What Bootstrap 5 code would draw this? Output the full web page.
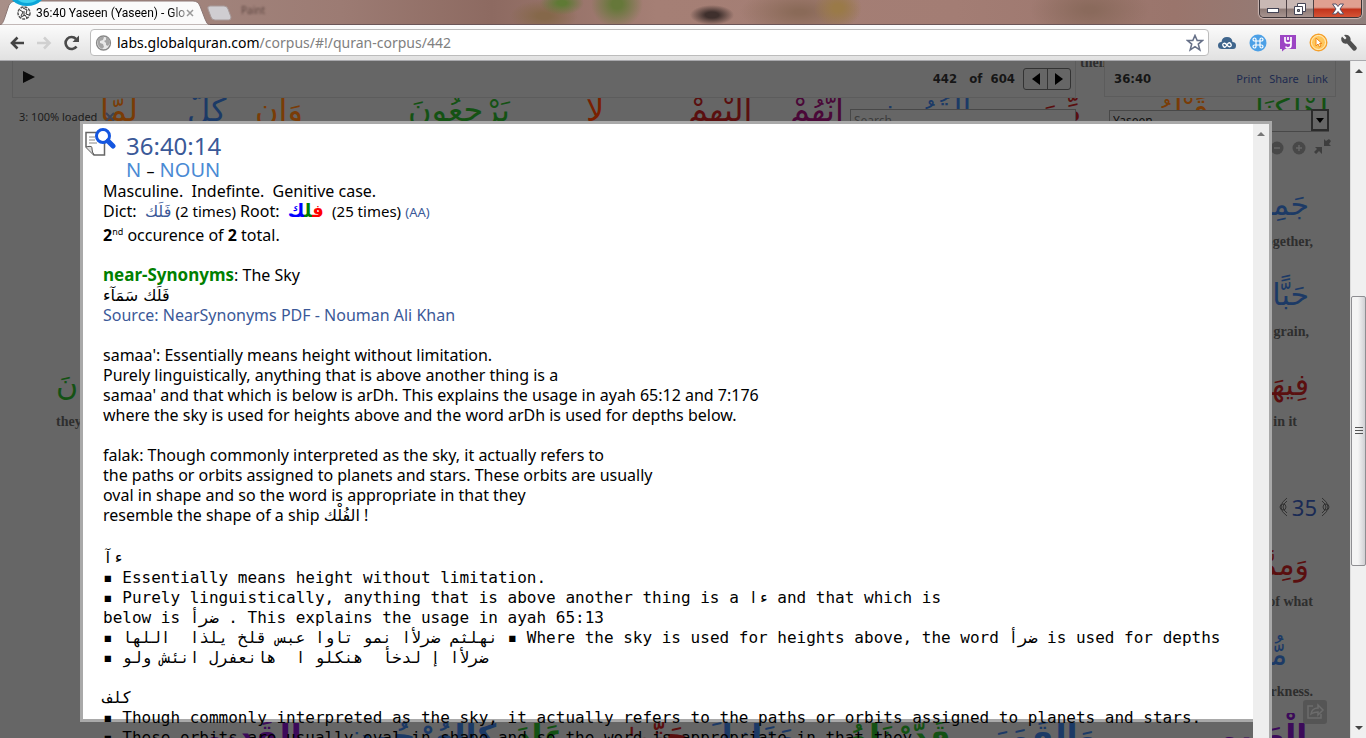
<!DOCTYPE html>
<html lang="en">
<head>
<meta charset="utf-8">
<meta name="viewport" content="width=device-width, initial-scale=1">
<title>36:40 Yaseen (Yaseen) - Global Quran</title>
<link href="https://cdn.jsdelivr.net/npm/bootstrap@5.3.0/dist/css/bootstrap.min.css" rel="stylesheet">
<style>
  :root {
    --dim: #666; --dim-line: #5c5c5c; --frame: #a9a9a9;
    --w-orange: #7a3c06; --w-blue: #1c3a66; --w-green: #145214; --w-red: #5a0f0f;
    --w-purple: #3c0a5a; --w-rust: #7a2000; --w-plum: #4a0838;
  }
  body { font-family: "Noto Sans", "DejaVu Sans", sans-serif; font-size: 16px; line-height: 20px; color: #000; }
  button { font: inherit; }
  .plain { background: none; border: 0; padding: 0; line-height: 0; }

  /* browser frame */
  .tabstrip { height: 25px; background:
      radial-gradient(ellipse 22px 10px at 712px 15px, #3f302d 30%, transparent),
      radial-gradient(ellipse 26px 24px at 617px 4px, #66783a 20%, transparent),
      radial-gradient(ellipse 22px 12px at 562px 3px, #5f7a35 20%, transparent),
      radial-gradient(ellipse 34px 16px at 544px 16px, #85684a 20%, transparent),
      radial-gradient(ellipse 24px 20px at 838px 8px, #9a7a48 20%, transparent),
      radial-gradient(ellipse 60px 24px at 800px 12px, #8a6a58 10%, transparent),
      radial-gradient(ellipse 60px 30px at 1090px 10px, #8a6a5c 10%, transparent),
      linear-gradient(90deg, #a88f88, #9c7b73 25%, #8d6a61 36%, #a57f75 48%, #a37d74 70%, #9a756c 86%, #8f7f7c);
    border-bottom: 1px solid #6b5557; }
  .tab-face { width: 207px; height: 25px; }
  .tab-shape { left: 0; top: 0; }
  .tab-title { font-family: Roboto, sans-serif; font-size: 12px; line-height: 16px; width: 149px; white-space: nowrap; overflow: hidden;
    -webkit-mask-image: linear-gradient(90deg, #000 90%, #0006); }
  .ghost { font-size: 10px; color: #5f4742; filter: blur(1px); }
  .winbtns { border: 1px solid #3c3336; border-top: 0; border-radius: 0 0 5px 5px; height: 18px; overflow: hidden; box-shadow: 0 0 1px 1px #cdb9b5; }
  .winbtns button { width: 27px; height: 18px; border-right: 1px solid #4d4144; background: linear-gradient(#c9b8b4 45%, #8d7975 50%, #ab9893); }
  .winbtns .shut { width: 47px; border: 0; background: linear-gradient(#e0a090 40%, #c2341c 52%, #d8583a); }
  .toolbar { height: 36px; padding: 0 8px 0 6px; background: linear-gradient(#fbfbfb, #e1e1e1); border-bottom: 1px solid #a9a9ad; }
  .urlbar { height: 27px; border: 1px solid #bcbcbc; border-radius: 4px; background: #fff; }
  .url { font-size: 14px; line-height: 24px; }
  .url a { color: #000; text-decoration: none; }
  .url a span { color: #808080; }

  /* dimmed page */
  .viewport { min-height: 0; }
  .stage { background: var(--dim); overflow: hidden; }
  .bar { height: 37px; border: 1px solid var(--dim-line); border-top: 0; }
  .bar-main { padding: 0 4px 0 5px; }
  .bar-side { width: 232px; height: 36px; margin-right: 14px; padding: 0 7px 0 9px; }
  .bar-gap { width: 28px; line-height: 4px; }
  .count { font: bold 13px/16px "DejaVu Sans Condensed", "DejaVu Sans", sans-serif; color: #161616; }
  .mini { font-size: 11px; line-height: 14px; color: #1c2a50; text-decoration: none; }
  .pager { border: 1px solid #333; border-radius: 3px; height: 22px; }
  .pager button { width: 23px; height: 20px; }
  .pager button + button { border-left: 1px solid #333; }
  .serif-b { font-family: "Liberation Serif", serif; font-weight: bold; font-size: 14px; color: #2e2e2e; white-space: nowrap; }
  .verse { display: grid; overflow: hidden; white-space: nowrap; font-family: "DejaVu Sans", sans-serif; }
  .verse > span { min-width: 0; }
  .verse-top { height: 24px; font-size: 32px; line-height: 36px; grid-template-columns: 87fr 68fr 153fr 178fr 102fr 102fr 90fr 160fr 97fr 118fr 95fr; padding-left: 100px; align-content: center; }
  .verse-low { top: 652px; height: 50px; font-size: 32px; line-height: 46px; font-weight: bold; grid-template-columns: 145fr 170fr 105fr 85fr 145fr 140fr 225fr 135fr; padding-left: 200px; }
  .orange { color: var(--w-orange); } .blue { color: var(--w-blue); } .green { color: var(--w-green); }
  .red { color: var(--w-red); } .purple { color: var(--w-purple); } .rust { color: var(--w-rust); } .plum { color: var(--w-plum); }
  .fields { left: 0; right: 0; top: 48px; padding: 0 21px 0 19px; }
  .fields input, .fields select { background: var(--dim); border: 1px solid #484848; border-radius: 0; color: #111; font-size: 12px; height: 22px; line-height: 18px; padding: 0 3px; }
  .fields input { width: 226px; }
  .fields input::placeholder { color: #3c3c3c; opacity: 1; }
  .picker { width: 220px; margin-left: 33px; }
  .picker select { width: 100%; appearance: none; }
  .picker span { right: 0; top: 0; width: 18px; height: 22px; border: 2px solid #2b2b2b; }
  .loaded { font-size: 11px; line-height: 16px; color: #1c1c1c; white-space: nowrap; }
  .tools-row { height: 24px; padding-right: 18px; margin-top: 9px; }
  .gutters { padding-top: 25px; }
  .gutter { width: 78px; }
  .gutter > div { height: 90px; padding-right: 37px; }
  .gutter .word { font: 30px/50px "DejaVu Sans", sans-serif; height: 50px; padding-right: 4px; white-space: nowrap; text-align: right; }
  .gutter .word.indent { padding-right: 26px; }
  .gutter .serif-b { display: flex; justify-content: flex-end; line-height: 24px; }
  .gutter-left { padding: 180px 0 0 56px; }
  .aya { font-size: 22px; color: #1a2b55; }
  .share { right: 23px; bottom: 14px; }

  /* page scrollbar */
  .vtrack { width: 16px; background: #f0f0f0; border-left: 1px solid #dcdcdc; }
  .vthumb { height: 270px; margin-top: 223px; border: 1px solid #8e8e92; border-radius: 2px; background: linear-gradient(90deg, #f4f4f4 45%, #d0d0d4); }

  /* word detail panel */
  .panel { left: 80px; right: 78px; top: 60px; bottom: 0; }
  .sheet { background: #fff; border: 3px solid var(--frame); border-right: 0; margin-bottom: 16px; padding-left: 20px; min-width: 0; }
  .ptrack { width: 19px; border-top: 3px solid var(--frame); border-right: 3px solid var(--frame); background: #eee; }
  .panel a { color: #3b5998; text-decoration: none; }
  .note-icon { left: 2px; top: 3px; }
  .heads { padding: 8px 0 0 23px; }
  .heads h1 { font-size: 24px; line-height: 28px; margin: 0; color: #3b5998; font-weight: 400; }
  .heads h2 { font-size: 20px; line-height: 19px; margin: 0; color: #4a8ad4; font-weight: 400; }
  .heads h2 span { color: #000; font-size: 16px; }
  .sheet p { margin: 0 0 20px; white-space: nowrap; }
  .sheet .facts { margin-bottom: 0; }
  .sheet .count-line { line-height: 28px; margin-bottom: 16px; }
  .sheet .s15 { font-size: 15px; line-height: 16px; }
  .sheet .s13 { font-size: 13px; line-height: 16px; }
  .sheet .near { font-size: 17px; color: green; }
  .sheet sup { font-size: 9px; line-height: 0; top: -6px; }
  .ar { font-family: "DejaVu Sans", sans-serif; line-height: 16px; }
  .root { font-size: 18px; }
  .notes { font: 16px/20px "DejaVu Sans Mono", monospace; margin: 23px 0 0; overflow: visible; color: #000; }
</style>
</head>
<body class="vh-100 d-flex flex-column overflow-hidden">

<header>
  <div class="tabstrip d-flex align-items-start">
    <div class="tab-face position-relative d-flex align-items-center flex-shrink-0">
      <svg class="tab-shape position-absolute" width="210" height="25" viewBox="0 0 210 25"><path d="M0 25C3 24 4 20 6 14L9 5Q11 1 15 1H193Q198 1 200 6L205 19Q207 25 210 25Z" fill="#fafafa" stroke="#8b7674"/><path d="M12 0H42Q36 6 27 6T12 0Z" fill="#0aa5d8"/><path d="M18 0H37Q33 3 27 3T18 0Z" fill="#3fd2f0"/></svg>
      <svg class="position-relative ms-3 flex-shrink-0" width="16" height="16" viewBox="0 0 16 16"><circle cx="8" cy="8" r="6" fill="none" stroke="#555" stroke-width="1.500" stroke-dasharray="3 1"/><path d="M4 5l3 2-2 4M7 3l4 2-1 4 3 1M5 12l4-2 2 3M8 6v5" stroke="#333" fill="none"/></svg>
      <span class="tab-title position-relative ms-1 flex-shrink-0">36:40 Yaseen (Yaseen) - Glo</span>
      <button class="plain position-relative" aria-label="Close tab"><svg width="10" height="10" viewBox="0 0 10 10"><path d="M2 2l6 6M8 2l-6 6" stroke="#999" stroke-width="1.500"/></svg></button>
    </div>
    <button class="plain mt-1" aria-label="New tab"><svg width="26" height="17" viewBox="0 0 26 17"><path d="M3 2H17Q20 2 21 5L24 13Q24 16 22 16H8Q5 16 4 13L1 5Q0 2 3 2Z" fill="#cfcdd1" stroke="#a79a9a"/></svg></button>
    <span class="ghost ms-2">Paint</span>
    <div class="winbtns d-flex ms-auto me-1">
      <button class="plain" aria-label="Minimize"><svg width="14" height="14" viewBox="0 0 14 14"><rect x="1.500" y="6.500" width="11" height="4" fill="#fff" stroke="#445"/></svg></button>
      <button class="plain" aria-label="Restore"><svg width="14" height="14" viewBox="0 0 14 14"><path d="M4.500 1.500h8v8h-8z" fill="#fff" stroke="#445"/><path d="M1.500 4.500h8v8h-8z" fill="#fff" stroke="#445"/><path d="M4.500 7.500h2v2h-2z" fill="#998" stroke="#445"/></svg></button>
      <button class="plain shut" aria-label="Close"><svg width="14" height="14" viewBox="0 0 14 14"><path d="M1.500 2h3.500l2 2.500 2-2.500h3.500L9 7l3.500 5H9L7 9.500 5 12H1.500L5 7Z" fill="#fff" stroke="#545068"/></svg></button>
    </div>
  </div>

  <div class="toolbar d-flex align-items-center">
    <button class="plain ms-1" aria-label="Back"><svg width="18" height="16" viewBox="0 0 18 16"><path d="M14 8H2M7.500 2.500L2 8l5.500 5.500" fill="none" stroke="#444" stroke-width="2.600"/></svg></button>
    <button class="plain ms-2 me-1" aria-label="Forward"><svg width="18" height="16" viewBox="0 0 18 16"><path d="M1 8H13M8 2.500L13.500 8 8 13.500" fill="none" stroke="#d0d0d0" stroke-width="2.600"/></svg></button>
    <button class="plain ms-1 me-2" aria-label="Reload"><svg width="20" height="18" viewBox="0 0 20 18"><path d="M14.500 12.500A6 6 0 1 1 14 5" fill="none" stroke="#4a4a4a" stroke-width="2.600"/><path d="M17 1.500V8H10.500Z" fill="#4a4a4a"/></svg></button>
    <div class="urlbar flex-grow-1 d-flex align-items-center px-1">
      <svg width="18" height="18" viewBox="0 0 18 18"><circle cx="8.500" cy="9" r="7" fill="#e8e8e8" stroke="#888" stroke-width="1.300"/><path d="M3 5q3-3 6-2l-1 3-3 1v2l3 1 1 3-2 2Q2 12 2.500 7ZM11 3q4 1 4 6l-2 3-2-1v-2l-2-2 2-1Z" fill="#a5a5a5"/></svg>
      <span class="url ps-1 me-auto"><a href="#">labs.globalquran.com<span>/corpus/#!/quran-corpus/442</span></a></span>
      <button class="plain" aria-label="Bookmark"><svg width="18" height="18" viewBox="0 0 18 18"><path d="M9 1.500l2.200 5h5.300l-4.200 3.600 1.500 5.700L9 12.600l-4.800 3.200 1.500-5.700L1.500 6.500h5.300Z" fill="#fff" stroke="#667088" stroke-width="1.600"/></svg></button>
    </div>
    <div class="d-flex align-items-center gap-2 ps-2">
      <button class="plain" aria-label="Cloud"><svg width="20" height="18" viewBox="0 0 20 18"><path d="M5 15Q1 15 1 11.500T4.500 8Q5 3 10 3t5.500 5Q19 8 19 11.500T16 15Z" fill="#3f658c"/><path d="M10 11q-2-2.500-3.500-1.500t0 3T10 11t3.500-1.500 0 3T10 11" fill="none" stroke="#fff" stroke-width="1.300"/></svg></button>
      <button class="plain ms-1" aria-label="Shortcuts"><svg width="18" height="18" viewBox="0 0 18 18"><circle cx="9" cy="9" r="8.500" fill="#4ca0e6"/><path d="M7 7H5.500A1.500 1.500 0 1 1 7 5.500v7A1.500 1.500 0 1 1 5.500 11h7A1.500 1.500 0 1 1 11 12.500v-7A1.500 1.500 0 1 1 12.500 7Z" fill="none" stroke="#fff" stroke-width="1.200"/></svg></button>
      <button class="plain ms-1" aria-label="Notes"><svg width="18" height="18" viewBox="0 0 18 18"><path d="M1 1h16v14H6l-3 2.500V15H1Z" fill="#9c45c4"/><path d="M6 3v4q0 2 3 2t3-2M12 3v8q0 3-3 3-2 0-2-1.500M9 3v3" fill="none" stroke="#fff" stroke-width="1.700"/></svg></button>
      <button class="plain ms-1" aria-label="Clicker"><svg width="19" height="19" viewBox="0 0 19 19"><circle cx="9.500" cy="9.500" r="8.300" fill="#ffc65a" stroke="#f5a02c" stroke-width="1.400"/><circle cx="9.500" cy="9.500" r="7" fill="none" stroke="#fff0c8"/><path d="M7 5v8l2-2 1.500 3 1.500-1-1.500-2.500H13Z" fill="#fff" stroke="#f08818"/></svg></button>
      <button class="plain ms-1" aria-label="Settings"><svg width="18" height="18" viewBox="0 0 18 18"><path d="M2 2.500L5 5.500 6.500 4 4 1Q8 0 10 3q1 2 .5 3.500l6 6.500q1 1.500-.5 3t-3 .2L7 9.500Q3 10.500 1.500 7 .5 4 2 2.500Z" fill="#505050"/></svg></button>
    </div>
  </div>
</header>

<div class="viewport flex-grow-1 d-flex">
  <main class="stage flex-grow-1 position-relative d-flex flex-column">

    <div class="d-flex ps-2 flex-shrink-0">
      <div class="bar bar-main flex-grow-1 d-flex align-items-center ms-1">
        <button class="plain ms-1 mb-1" aria-label="Play"><svg width="14" height="14" viewBox="0 0 14 14"><path d="M1 1L13 7 1 13Z" fill="#0a0a0a"/></svg></button>
        <span class="count ms-auto me-2">442 &nbsp; of &nbsp;604</span>
        <div class="pager d-flex">
          <button class="plain" aria-label="Previous page"><svg width="8" height="12" viewBox="0 0 8 12"><path d="M8 0v12L0 6Z"/></svg></button>
          <button class="plain" aria-label="Next page"><svg width="8" height="12" viewBox="0 0 8 12"><path d="M0 0v12L8 6Z"/></svg></button>
        </div>
      </div>
      <div class="bar-gap serif-b overflow-hidden ps-1">their</div>
      <div class="bar bar-side d-flex align-items-center gap-2">
        <span class="count me-auto">36:40</span>
        <a class="mini" href="#">Print</a><a class="mini" href="#">Share</a><a class="mini" href="#">Link</a>
      </div>
    </div>

    <div class="verse verse-top flex-shrink-0">
      <span class="orange">لَّمَّا</span><span class="blue">كُلٌّ</span><span class="orange">وَإِن</span><span class="green">يَرْجِعُونَ</span><span class="rust">لَا</span><span class="red">إِلَيْهِمْ</span><span class="plum">أَنَّهُمْ</span><span class="blue">الْقُرُونِ</span><span class="red">مِّنَ</span><span class="orange">قَبْلَهُم</span><span class="green">أَهْلَكْنَا</span>
    </div>

    <div class="fields position-absolute d-flex align-items-start">
      <span class="loaded d-flex align-items-center gap-2 me-auto">3: 100% loaded <svg width="10" height="10" viewBox="0 0 10 10"><path d="M1 1l8 8M9 1l-8 8" stroke="#3d4456" stroke-width="2"/></svg></span>
      <input type="text" placeholder="Search" aria-label="Search">
      <div class="picker position-relative"><select aria-label="Surah"><option>Yaseen</option></select><span class="position-absolute d-flex align-items-center justify-content-center pe-none"><svg width="8" height="5" viewBox="0 0 8 5"><path d="M0 0h8L4 5Z"/></svg></span></div>
    </div>

    <div class="tools-row d-flex justify-content-end align-items-end gap-2 flex-shrink-0">
      <svg width="14" height="14" viewBox="0 0 14 14"><circle cx="7" cy="7" r="6.500" fill="#484848"/><path d="M4 7h6" stroke="#666" stroke-width="1.500"/></svg>
      <svg width="14" height="14" viewBox="0 0 14 14"><circle cx="7" cy="7" r="6.500" fill="#484848"/><path d="M4 7h6M7 4v6" stroke="#666" stroke-width="1.500"/></svg>
      <svg width="18" height="17" viewBox="0 0 18 17"><path d="M10 1v7h7l-2-2 2-3-2-2-3 2ZM8 16V9H1l2 2-3 3 2 2 3-3Z" fill="#3e3e3e"/></svg>
    </div>

    <div class="gutters d-flex justify-content-between">
      <div class="gutter-left">
        <div class="gutter"><div class="p-0"><div class="word green text-start p-0">نَ</div><span class="serif-b justify-content-start">they</span></div></div>
      </div>
      <div class="gutter d-flex flex-column">
        <div><div class="word blue" dir="rtl">جَمِيعًا</div><span class="serif-b">together,</span></div>
        <div><div class="word blue" dir="rtl">حَبًّا</div><span class="serif-b pe-1">grain,</span></div>
        <div><div class="word red" dir="rtl">فِيهَا</div><span class="serif-b pe-3">in it</span></div>
        <div class="aya d-flex align-items-center justify-content-end pe-3 pt-4"><svg width="9" height="20" viewBox="0 0 9 20"><path d="M8 1Q2 5 2 10t6 9M8 4Q4 7 4 10t4 6" fill="none" stroke="#333"/><circle cx="4" cy="10" r="3" fill="none" stroke="#333"/></svg><span class="px-1">35</span><svg class="me-1" width="9" height="20" viewBox="0 0 9 20"><path d="M1 1q6 4 6 9t-6 9M1 4q4 3 4 6t-4 6" fill="none" stroke="#333"/><circle cx="5" cy="10" r="3" fill="none" stroke="#333"/></svg></div>
        <div><div class="word red" dir="rtl">وَمِمَّا</div><span class="serif-b">of what</span></div>
        <div><div class="word blue indent" dir="rtl">مُّظْلِمُونَ</div><span class="serif-b">darkness.</span></div>
      </div>
    </div>
    <div class="verse verse-low position-absolute start-0 end-0">
      <span class="purple">الْقَدِيمِ</span><span class="blue">كَالْعُرْجُونِ</span><span class="green">عَادَ</span><span class="red">حَتَّىٰ</span><span class="blue">مَنَازِلَ</span><span class="green">قَدَّرْنَاهُ</span><span class="blue">وَالْقَمَرَ</span><span class="purple">الْعَلِيمِ</span>
    </div>
    <button class="plain share position-absolute" aria-label="Share page"><svg width="24" height="24" viewBox="0 0 24 24"><rect width="24" height="24" rx="3" fill="#555"/><path d="M10 6H5v12h13v-4M8 14q1-6 7-6V5l5 5-5 5v-3q-4 0-7 2Z" fill="none" stroke="#6c6c6c" stroke-width="1.500"/></svg></button>

    <section class="panel position-absolute d-flex">
      <div class="sheet flex-grow-1 position-relative">
        <svg class="note-icon position-absolute" width="31" height="30" viewBox="0 0 31 30"><path d="M1 5.500H19.500V28H9L1 20Z" fill="#fff" stroke="#666" stroke-width="1.500"/><path d="M1 20q7-2 6 2 0 3 2 6" fill="#ddd" stroke="#555"/><path d="M4 10h6M4 13h6M4 16h8" stroke="#888"/><circle cx="18" cy="9" r="6.500" fill="#fff" stroke="#1456e0" stroke-width="3"/><path d="M23 14l5 5" stroke="#1456e0" stroke-width="5" stroke-linecap="round"/></svg>
        <div class="heads"><h1>36:40:14</h1><h2>N <span>–</span> NOUN</h2></div>
        <p class="facts">Masculine.&nbsp; Indefinte.&nbsp; Genitive case.<br>
          Dict:&nbsp; <a href="#" class="ar">فَلَك</a> <span class="s15">(2 times)</span> Root:&nbsp; <b class="ar root"><bdo dir="rtl"><span style="color:#f00">ف</span><span style="color:green">ل</span><span style="color:#00f">ك</span></bdo></b>&nbsp; <span class="s15">(25 times)</span> <a href="#" class="s13">(AA)</a></p>
        <p class="count-line"><b>2</b><sup>nd</sup> occurence of <b>2</b> total.</p>
        <p><b class="near">near-Synonyms</b>: The Sky<br>
          <span class="ar">فَلَك سَمَآء</span><br>
          <a href="#">Source: NearSynonyms PDF - Nouman Ali Khan</a></p>
        <p>samaa': Essentially means height without limitation.<br>
          Purely linguistically, anything that is above another thing is a<br>
          samaa' and that which is below is arDh. This explains the usage in ayah 65:12 and 7:176<br>
          where the sky is used for heights above and the word arDh is used for depths below.</p>
        <p>falak: Though commonly interpreted as the sky, it actually refers to<br>
          the paths or orbits assigned to planets and stars. These orbits are usually<br>
          oval in shape and so the word is appropriate in that they<br>
          resemble the shape of a ship <span class="ar">الفُلْك</span> !</p>
<pre class="notes">ءآ
▪ Essentially means height without limitation.
▪ Purely linguistically, anything that is above another thing is a ءا and that which is
below is ضرأ . This explains the usage in ayah 65:13
▪ نهلثم ضرلأا نمو تاوا عبس قلخ يلذا  اللها ▪ Where the sky is used for heights above, the word ضرأ is used for depths
▪ ضرلأا إ لدخأ  هنكلو ا  هانعفرل انئش ولو

كلف
▪ Though commonly interpreted as the sky, it actually refers to the paths or orbits assigned to planets and stars.
▪ These orbits are usually oval in shape and so the word is appropriate in that they</pre>
      </div>
      <div class="ptrack text-center flex-shrink-0"><svg class="d-block mx-auto mt-2" width="8" height="4" viewBox="0 0 8 4"><path d="M0 4h8L4 0Z" fill="#777"/></svg></div>
    </section>
  </main>

  <div class="vtrack flex-shrink-0 d-flex flex-column align-items-stretch">
    <svg class="mx-auto mt-2" width="8" height="4" viewBox="0 0 8 4"><path d="M0 4h8L4 0Z" fill="#444"/></svg>
    <div class="vthumb d-flex align-items-center justify-content-center"><svg width="8" height="8" viewBox="0 0 8 8"><path d="M0 .5h8M0 3.500h8M0 6.500h8" stroke="#555"/></svg></div>
    <svg class="mx-auto mt-auto mb-2" width="8" height="4" viewBox="0 0 8 4"><path d="M0 0h8L4 4Z" fill="#444"/></svg>
  </div>
</div>
<script src="https://cdn.jsdelivr.net/npm/bootstrap@5.3.0/dist/js/bootstrap.bundle.min.js"></script>
</body>
</html>
